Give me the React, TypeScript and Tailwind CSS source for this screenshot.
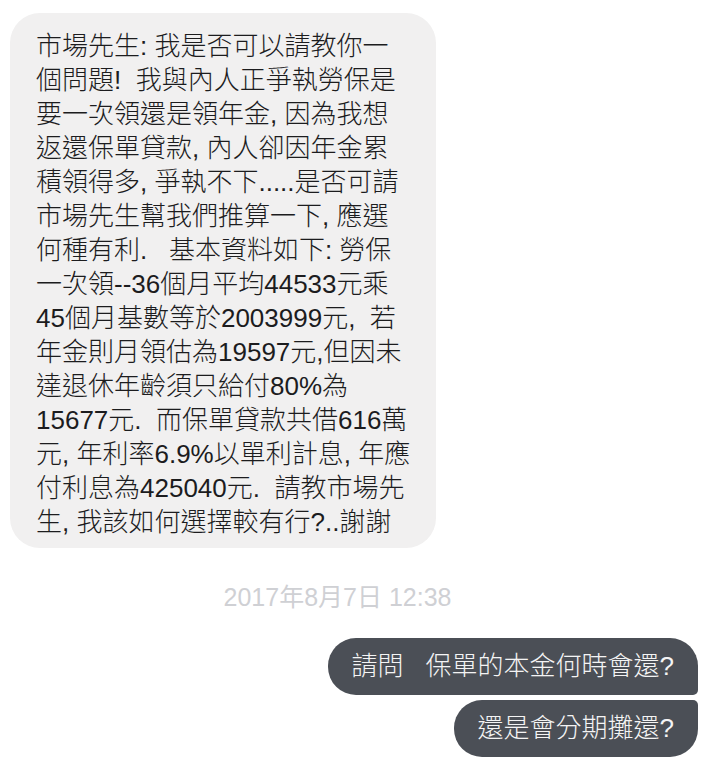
const FONT = "font-['Liberation_Sans','Noto_Sans_CJK_TC',sans-serif]";

const LINES = [
  "市場先生: 我是否可以請教你一",
  "個問題!  我與內人正爭執勞保是",
  "要一次領還是領年金, 因為我想",
  "返還保單貸款, 內人卻因年金累",
  "積領得多, 爭執不下.....是否可請",
  "市場先生幫我們推算一下, 應選",
  "何種有利.   基本資料如下: 勞保",
  "一次領--36個月平均44533元乘",
  "45個月基數等於2003999元,  若",
  "年金則月領估為19597元,但因未",
  "達退休年齡須只給付80%為",
  "15677元.  而保單貸款共借616萬",
  "元, 年利率6.9%以單利計息, 年應",
  "付利息為425040元.  請教市場先",
  "生, 我該如何選擇較有行?..謝謝",
];

function Incoming() {
  return (
    <div className="ml-[10px] mt-[13px] w-[426px] rounded-[30px] bg-[#f1f0f0] pl-[26px] pr-[20px] pt-[16px] pb-[9px]">
      {LINES.map((line, i) => (
        <div
          key={i}
          className="whitespace-pre text-[26px] font-light leading-[34px] text-[#1c1c1e]"
        >
          {line}
        </div>
      ))}
    </div>
  );
}

function Outgoing({ children, first }: { children: React.ReactNode; first?: boolean }) {
  return (
    <div
      className={[
        "h-[57px] rounded-[28px] bg-[#4b4f56] px-[24px] py-[11px] text-[26px] font-light leading-[35px] whitespace-pre text-[#f4f4f4]",
        first ? "rounded-br-[5px]" : "rounded-tr-[5px]",
      ].join(" ")}
    >
      {children}
    </div>
  );
}

export default function App() {
  return (
    <div className={`min-h-[768px] w-[710px] bg-white ${FONT}`}>
      <Incoming />

      <div className="mt-[34px] flex justify-center pr-[35px]">
        <span className="text-[25px] leading-[30px] text-[#cfd0d4]">
          2017年8月7日 12:38
        </span>
      </div>

      <div className="mt-[26px] flex flex-col items-end gap-[5px] pr-[12px]">
        <Outgoing first>
          請問<span className="inline-block w-[22px]" />保單的本金何時會還?
        </Outgoing>
        <Outgoing>還是會分期攤還?</Outgoing>
      </div>
    </div>
  );
}
